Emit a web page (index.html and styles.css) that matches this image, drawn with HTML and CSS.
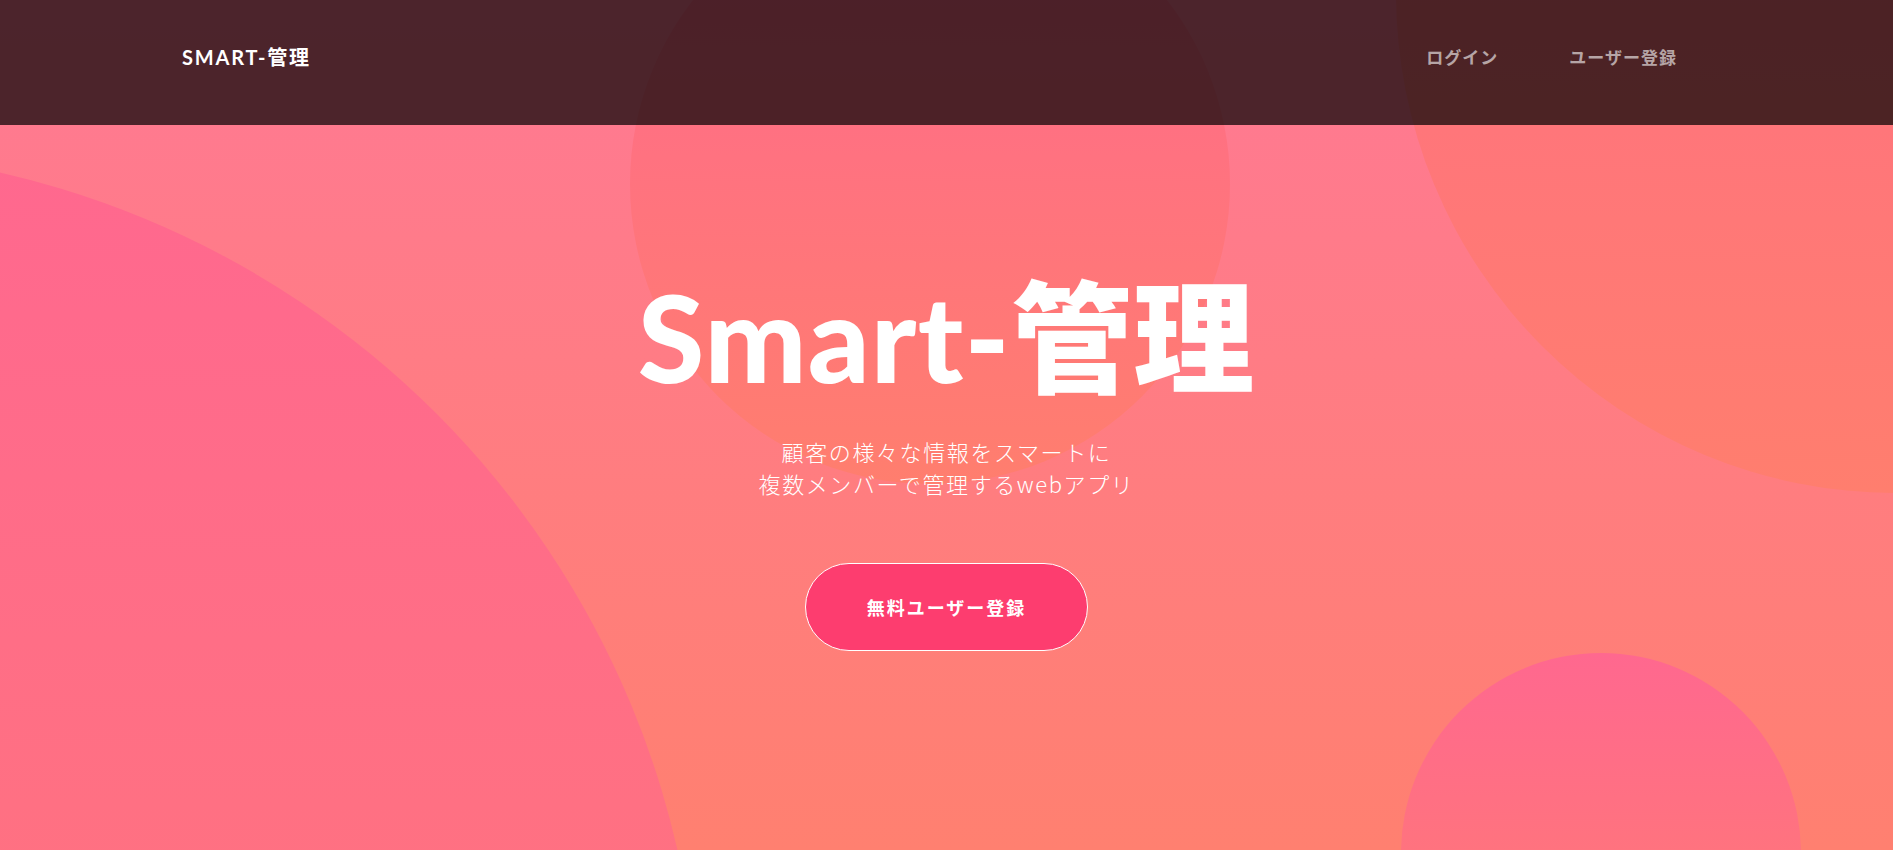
FILE: index.html
```html
<!DOCTYPE html>
<html lang="ja">
<head>
<meta charset="utf-8">
<title>Smart-管理</title>
<link rel="stylesheet" href="styles.css">
</head>
<body>
<div class="page">
  <header class="navbar">
    <a class="brand" href="#">SMART-管理</a>
    <nav class="nav">
      <a class="nav-link" href="#">ログイン</a>
      <a class="nav-link" href="#">ユーザー登録</a>
    </nav>
  </header>
  <section class="masthead">
    <div class="bg-circle bg-circle-1"></div>
    <div class="bg-circle bg-circle-2"></div>
    <div class="bg-circle bg-circle-3"></div>
    <div class="bg-circle bg-circle-4"></div>
    <div class="masthead-content">
      <h1 class="masthead-heading">Smart-管理</h1>
      <p class="masthead-subheading">顧客の様々な情報をスマートに<br>複数メンバーで管理するwebアプリ</p>
      <a class="btn-xl" href="#">無料ユーザー登録</a>
    </div>
  </section>
</div>
</body>
</html>
```
FILE: styles.css
```css
* { box-sizing: border-box; }
html, body { margin: 0; padding: 0; }
body {
  font-family: "Lato", "Noto Sans CJK JP", sans-serif;
  color: #fff;
  overflow: hidden;
}
a { text-decoration: none; }

.page {
  position: relative;
  width: 100%;
  height: 850px;
  overflow: hidden;
}

.navbar {
  position: absolute;
  top: 0;
  left: 0;
  right: 0;
  z-index: 10;
  height: 125px;
  padding: 0 216px 12px 182px;
  display: flex;
  align-items: center;
  justify-content: space-between;
  background: rgba(0, 0, 0, 0.7);
}
.brand {
  color: #fff;
  font-family: "Lato", "Noto Sans CJK JP", sans-serif;
  font-weight: 700;
  font-size: 20px;
  letter-spacing: 1.8px;
}
.nav {
  display: flex;
  gap: 71px;
}
.nav-link {
  color: rgba(255, 255, 255, 0.6);
  font-family: "Noto Sans CJK JP", sans-serif;
  font-weight: 700;
  font-size: 17px;
  letter-spacing: 1px;
}

.masthead {
  position: relative;
  height: 850px;
  background: linear-gradient(180deg, #ff7994 0%, #ff8070 100%);
}
.bg-circle {
  position: absolute;
  z-index: 0;
  border-radius: 50%;
  background: linear-gradient(180deg, #ff688f 0%, #ff7e6e 100%);
}
.bg-circle-1 { width: 1800px; height: 1800px; left: -1100px; top: 150px; }
.bg-circle-2 { width: 1000px; height: 1000px; right: -503px; top: -507px; }
.bg-circle-3 { width: 400px; height: 400px; right: 92px; top: 653px; }
.bg-circle-4 { width: 600px; height: 600px; right: 35%; top: -116px; }

.masthead-content {
  position: relative;
  z-index: 1;
  display: flex;
  flex-direction: column;
  align-items: center;
  padding-top: 277px;
  text-align: center;
}
.masthead-heading {
  margin: 0;
  font-family: "Lato", "Noto Sans CJK JP", sans-serif;
  font-weight: 900;
  font-size: 121px;
  line-height: 120px;
  letter-spacing: 1.2px;
}
.masthead-subheading {
  margin: 38px 0 0;
  font-family: "Noto Sans CJK JP", sans-serif;
  font-weight: 300;
  font-size: 22px;
  line-height: 32px;
  letter-spacing: 1.6px;
}
.btn-xl {
  margin-top: 64px;
  width: 283px;
  height: 88px;
  display: flex;
  align-items: center;
  justify-content: center;
  border: 1px solid #fff;
  border-radius: 50px;
  background: #fd3d6f;
  color: #fff;
  font-family: "Noto Sans CJK JP", sans-serif;
  font-weight: 700;
  font-size: 18px;
  letter-spacing: 2px;
}
```
